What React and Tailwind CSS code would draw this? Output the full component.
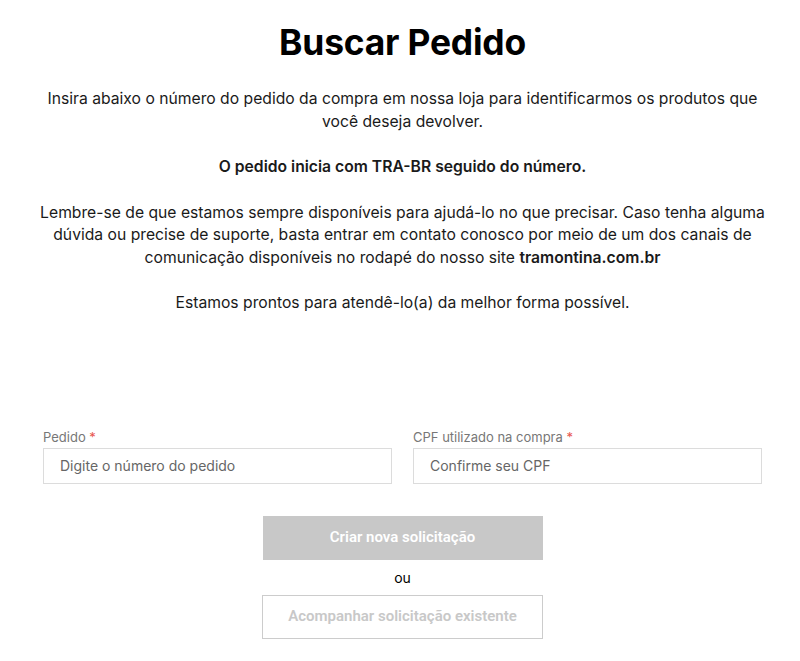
export default function App() {
  return (
    <div className="min-h-screen bg-white font-['Inter',sans-serif] text-[#1a1a1a]">
      <div className="ml-[43px] mr-[38px] flex flex-col items-center">
        <h1 className="mt-[22px] text-[35.4px] leading-[42px] font-bold text-black tracking-[-0.2px]">Buscar Pedido</h1>
        <div className="mt-[24px] text-center text-[15.7px] leading-[22.5px] w-[744px] shrink-0">
          <p>
            Insira abaixo o número do pedido da compra em nossa loja para identificarmos os produtos que você deseja devolver.
          </p>
          <p className="mt-[23px] font-semibold">O pedido inicia com TRA-BR seguido do número.</p>
          <p className="mt-[23px]">
            Lembre-se de que estamos sempre disponíveis para ajudá-lo no que precisar. Caso tenha alguma dúvida ou precise de suporte, basta entrar em contato conosco por meio de um dos canais de comunicação disponíveis no rodapé do nosso site <span className="font-semibold">tramontina.com.br</span>
          </p>
          <p className="mt-[23px]">Estamos prontos para atendê-lo(a) da melhor forma possível.</p>
        </div>

        <form className="mt-[113px] w-full">
          <div className="grid grid-cols-2 gap-[21px]">
            <label className="flex flex-col">
              <span className="text-[13px] leading-[18px] text-[#777]">
                Pedido <span className="text-[#e8554e]">*</span>
              </span>
              <input
                type="text"
                placeholder="Digite o número do pedido"
                className="mt-[2px] h-[36px] w-full border border-[#dcdcdc] px-4 text-[14px] text-[#333] outline-none placeholder:text-[#666]"
              />
            </label>
            <label className="flex flex-col">
              <span className="text-[13px] leading-[18px] text-[#777]">
                CPF utilizado na compra <span className="text-[#e8554e]">*</span>
              </span>
              <input
                type="text"
                placeholder="Confirme seu CPF"
                className="mt-[2px] h-[36px] w-full border border-[#dcdcdc] px-4 text-[14px] text-[#333] outline-none placeholder:text-[#666]"
              />
            </label>
          </div>
          <div className="mt-[32px] flex flex-col items-center">
            <button
              type="button"
              disabled
              className="h-[44px] w-[280px] bg-[#c8c8c8] text-[15px] font-semibold text-white font-['Roboto',sans-serif]"
            >
              Criar nova solicitação
            </button>
            <span className="mt-[8px] text-[14px] leading-[20px] text-black">ou</span>
            <button
              type="button"
              disabled
              className="mt-[7px] h-[44px] w-[281px] border border-[#cccccc] bg-white text-[15px] font-semibold text-[#c8c8c8] font-['Roboto',sans-serif]"
            >
              Acompanhar solicitação existente
            </button>
          </div>
        </form>
      </div>
    </div>
  )
}
